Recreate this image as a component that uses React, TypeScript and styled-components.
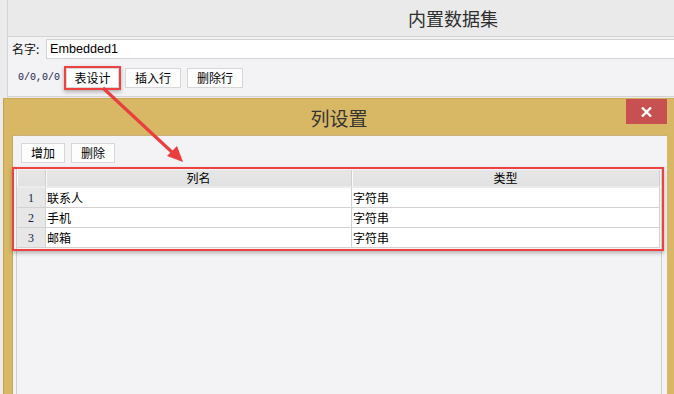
import React from "react";
import styled, { createGlobalStyle } from "styled-components";

const GlobalStyle = createGlobalStyle`
  html, body { margin: 0; padding: 0; overflow: hidden; }
  body { font-family: "Noto Sans CJK SC", "Noto Sans", sans-serif; }
`;

const CJK = `"Noto Sans CJK SC", "Noto Sans", sans-serif`;
const RED = "#ee4242";

const Window = styled.div`
  position: relative;
  width: 674px;
  height: 394px;
  overflow: hidden;
  display: flex;
  background: #eaeaea;
`;

const Gutter = styled.div`
  width: 7px;
  flex: none;
  border-right: 1px solid #d6d6d6;
  background: #ebebeb;
`;

const Main = styled.div`
  flex: 1;
  display: flex;
  flex-direction: column;
  min-width: 0;
`;

const TitleBar = styled.div`
  flex: none;
  display: flex;
  align-items: center;
  padding-left: 400px;
  border-bottom: 1px solid #d3d3d3;
  font-family: ${CJK};
  font-size: 18px;
  color: #2f2f2f;
  line-height: 1;
  box-sizing: border-box;
  height: 37px;
`;

const Form = styled.div`
  flex: none;
  background: #f3f3f5;
  padding: 2px 0 8px 4px;
  border-bottom: 1px solid #d3d3d3;
  display: flex;
  flex-direction: column;
  gap: 9px;
`;

const NameRow = styled.div`
  display: flex;
  align-items: center;
  height: 20px;
  gap: 4px;
`;

const Label = styled.span`
  font-family: ${CJK};
  font-size: 12px;
  line-height: 1;
  color: #111;
  width: 30px;
  white-space: nowrap;
`;

const TextInput = styled.div`
  flex: 1;
  height: 20px;
  box-sizing: border-box;
  background: #fff;
  border: 1px solid #d2d2d2;
  border-right: none;
  display: flex;
  align-items: center;
  padding-left: 3px;
  font-family: "Liberation Sans", Arial, sans-serif;
  font-size: 12.6px;
  color: #000;
`;

const ToolRow = styled.div`
  display: flex;
  align-items: center;
  height: 20px;
`;

const Counter = styled.span`
  font-family: "Liberation Mono", monospace;
  font-size: 10px;
  color: #1b1b4e;
  margin-left: 6px;
  width: 48px;
  line-height: 1;
  white-space: nowrap;
`;

const Buttons = styled.div<{ $gap: number }>`
  display: flex;
  gap: ${(p) => p.$gap}px;
`;

const Btn = styled.div<{ $w: number }>`
  position: relative;
  width: ${(p) => p.$w}px;
  height: 20px;
  box-sizing: border-box;
  background: #fdfdfd;
  border: 1px solid #d7d7d7;
  display: flex;
  align-items: center;
  justify-content: center;
  font-family: ${CJK};
  font-size: 12px;
  line-height: 1;
  color: #000;
`;

const Highlight = styled.div<{ $inset: number; $left: number }>`
  position: absolute;
  top: -${(p) => p.$inset}px;
  right: -${(p) => p.$inset}px;
  bottom: -${(p) => p.$inset}px;
  left: -${(p) => p.$left}px;
  border: 2px solid ${RED};
  box-shadow: 0 2px 4px rgba(0, 0, 0, 0.28);
  pointer-events: none;
  z-index: 3;
`;

const Dialog = styled.div`
  position: absolute;
  left: 3px;
  top: 98px;
  width: 671px;
  height: 310px;
  background: #d8b865;
  border-left: 1px solid #c3a350;
  border-top: 1px solid #c9ab58;
  box-sizing: border-box;
  display: flex;
  flex-direction: column;
`;

const DialogHead = styled.div`
  position: relative;
  height: 36px;
  flex: none;
  display: flex;
  align-items: center;
  justify-content: center;
  font-family: ${CJK};
  font-size: 19px;
  color: #333;
  line-height: 1;
  padding-top: 1px;
  box-sizing: border-box;
`;

const CloseBtn = styled.div`
  position: absolute;
  right: 7px;
  top: 0;
  width: 41px;
  height: 25px;
  background: #c75050;
  display: flex;
  align-items: center;
  justify-content: center;
`;

const DialogBody = styled.div`
  flex: 1;
  margin: 0 7px 0 8px;
  background: #f3f3f5;
  border-top: 1px solid #c8b27a;
  border-left: 1px solid #bfa860;
  display: flex;
  flex-direction: column;
  padding: 7px 0 0 0;
`;

const BodyToolbar = styled.div`
  display: flex;
  gap: 6px;
  padding-left: 8px;
  margin-bottom: 5px;
`;

const Pane = styled.div`
  position: relative;
  flex: 1;
  margin: 0 5px 0 3px;
  border: 1px solid #cfcfcf;
  border-bottom: none;
  padding-top: 1px;
`;

const Grid = styled.div`
  display: grid;
  grid-template-columns: 29px 306px 1fr;
  margin-right: 1px;
`;

const Head = styled.div`
  height: 18px;
  box-sizing: border-box;
  background: linear-gradient(#e6e6e6, #e2e2e2);
  border-bottom: 2px solid #ececec;
  border-right: 1px solid #cfcfcf;
  box-shadow: inset 1px 0 0 #fafafa;
  display: flex;
  align-items: center;
  justify-content: center;
  font-family: ${CJK};
  font-size: 12px;
  line-height: 1;
  color: #000;
`;

const NumCell = styled.div`
  height: 20px;
  box-sizing: border-box;
  background: #e7e7e7;
  border-bottom: 1px solid #d2d2d2;
  border-right: 1px solid #d2d2d2;
  display: flex;
  align-items: center;
  justify-content: center;
  font-family: "Liberation Serif", serif;
  font-size: 12px;
  color: #1a1a4a;
  line-height: 1;
`;

const Cell = styled.div`
  height: 20px;
  box-sizing: border-box;
  background: #fff;
  border-bottom: 1px solid #d2d2d2;
  border-right: 1px solid #d2d2d2;
  display: flex;
  align-items: center;
  padding-left: 1px;
  font-family: ${CJK};
  font-size: 12px;
  line-height: 1;
  color: #000;
`;

const TableWrap = styled.div`
  position: relative;
`;

const Overlay = styled.svg`
  position: absolute;
  left: 0;
  top: 0;
  pointer-events: none;
  z-index: 5;
`;

const rows = [
  { n: 1, name: "联系人", type: "字符串" },
  { n: 2, name: "手机", type: "字符串" },
  { n: 3, name: "邮箱", type: "字符串" },
];

export default function App() {
  return (
    <>
      <GlobalStyle />
      <Window>
        <Gutter />
        <Main>
          <TitleBar>内置数据集</TitleBar>
          <Form>
            <NameRow>
              <Label>名字:</Label>
              <TextInput>Embedded1</TextInput>
            </NameRow>
            <ToolRow>
              <Counter>0/0,0/0</Counter>
              <Buttons $gap={6}>
                <Btn $w={53}>
                  表设计
                  <Highlight $inset={3} $left={3} />
                </Btn>
                <Btn $w={56}>插入行</Btn>
                <Btn $w={56}>删除行</Btn>
              </Buttons>
            </ToolRow>
          </Form>
        </Main>

        <Dialog>
          <DialogHead>
            列设置
            <CloseBtn>
              <svg width="11" height="10" viewBox="0 0 11 10">
                <path d="M1 0.5 L10 9.5 M10 0.5 L1 9.5" stroke="#fff" strokeWidth="2.4" />
              </svg>
            </CloseBtn>
          </DialogHead>
          <DialogBody>
            <BodyToolbar>
              <Btn $w={44}>增加</Btn>
              <Btn $w={44}>删除</Btn>
            </BodyToolbar>
            <Pane>
              <TableWrap>
                <Grid>
                  <Head />
                  <Head>列名</Head>
                  <Head>类型</Head>
                  {rows.map((r) => (
                    <React.Fragment key={r.n}>
                      <NumCell>{r.n}</NumCell>
                      <Cell>{r.name}</Cell>
                      <Cell>{r.type}</Cell>
                    </React.Fragment>
                  ))}
                </Grid>
                <Highlight $inset={3} $left={5} />
              </TableWrap>
            </Pane>
          </DialogBody>
        </Dialog>

        <Overlay width="674" height="394" viewBox="0 0 674 394">
          <line x1="103" y1="88" x2="174" y2="154" stroke="#ea3f3f" strokeWidth="3.2" />
          <polygon points="183,162 167,156 177,146" fill="#ea3f3f" />
        </Overlay>
      </Window>
    </>
  );
}
